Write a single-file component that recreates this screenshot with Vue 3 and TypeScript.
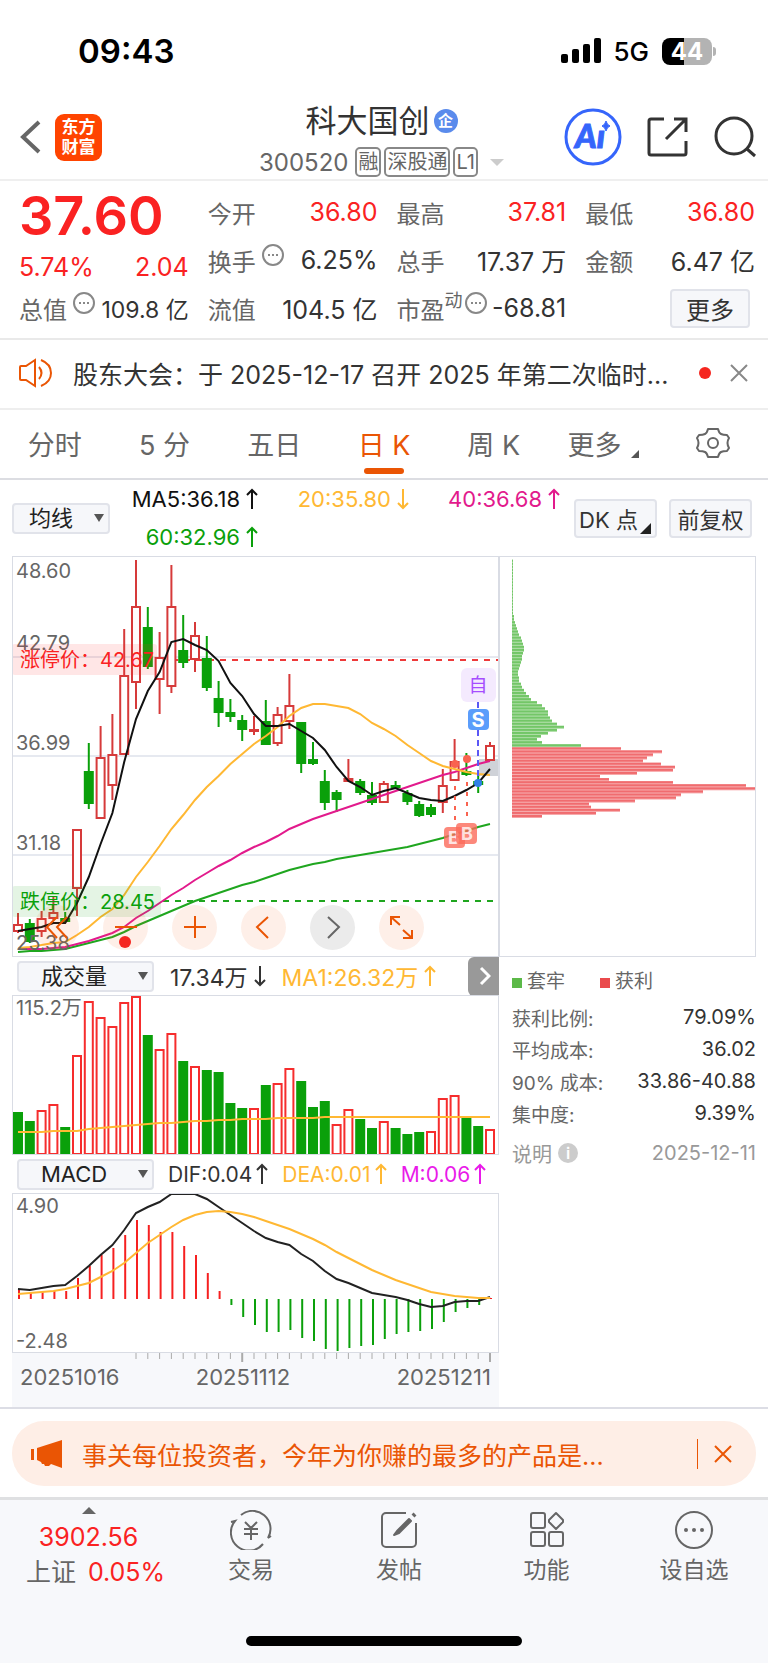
<script setup lang="ts">
import { ref } from 'vue'

type Candle = [kind: 'r' | 'g', high: number, top: number, bottom: number, low: number]

const STEP = 11.8
const cx = (i: number): number => Math.round((6 + i * STEP) * 10) / 10
const line = (ys: number[]): string => ys.map((y, i) => `${cx(i)},${y}`).join(' ')

const candles: Candle[] = [
  ['r', 357, 368, 376, 377], ['g', 363, 367, 386, 387], ['r', 355, 362, 376, 381], ['r', 340, 356, 363, 364],
  ['g', 356, 362, 366, 367], ['r', 273, 273, 333, 360], ['g', 187, 215, 248, 253], ['r', 170, 201, 263, 263],
  ['r', 158, 198, 230, 244], ['r', 73, 119, 199, 199], ['r', 4, 50, 127, 153], ['g', 51, 71, 111, 113],
  ['r', 76, 101, 124, 158], ['r', 9, 50, 131, 137], ['g', 59, 94, 107, 112], ['r', 66, 79, 104, 116],
  ['g', 80, 102, 132, 135], ['g', 125, 142, 157, 171], ['g', 143, 156, 161, 166], ['g', 159, 164, 174, 185],
  ['r', 160, 173, 175, 179], ['g', 144, 165, 189, 189], ['r', 151, 158, 188, 190], ['r', 118, 149, 166, 173],
  ['g', 166, 166, 208, 217], ['g', 186, 203, 208, 209], ['g', 214, 225, 247, 254], ['g', 234, 236, 244, 256],
  ['r', 203, 222, 226, 226], ['g', 223, 225, 237, 239], ['g', 226, 239, 247, 249], ['r', 225, 227, 247, 247],
  ['g', 225, 229, 232, 233], ['g', 234, 237, 246, 249], ['g', 245, 248, 260, 261], ['g', 248, 251, 259, 261],
  ['r', 213, 229, 247, 257], ['r', 183, 205, 225, 225], ['g', 197, 215, 219, 220], ['g', 219, 225, 229, 237],
  ['r', 186, 189, 205, 205],
]
const ma5 = [375, 373, 371, 367, 367, 347, 321, 288, 257, 206, 163, 135, 116, 86, 83, 89, 94, 105, 127, 140, 158, 170, 170, 168, 175, 182, 194, 211, 225, 231, 239, 235, 232, 237, 242, 244, 245, 240, 234, 227, 213]
const ma20 = [392, 391, 389, 387, 386, 379, 371, 361, 353, 339, 321, 306, 290, 273, 259, 244, 231, 220, 208, 198, 188, 180, 171, 160, 152, 148, 148, 150, 152, 158, 167, 173, 180, 189, 197, 205, 210, 213, 216, 218, 219]
const ma40 = [393, 393, 393, 392, 391, 388, 385, 381, 377, 371, 362, 355, 347, 339, 332, 324, 317, 310, 304, 297, 291, 286, 280, 273, 268, 263, 259, 255, 251, 247, 243, 239, 235, 231, 227, 223, 219, 216, 212, 208, 205]
const ma60 = [396, 395, 395, 394, 393, 390, 387, 384, 381, 376, 370, 365, 360, 355, 350, 345, 341, 337, 333, 329, 326, 322, 318, 314, 311, 308, 306, 303, 301, 299, 297, 295, 293, 291, 288, 285, 282, 278, 275, 271, 268]

const volKinds = 'ggrrgrrrrrrgrrgrggggrgrrgggrrggrgggrrrggr'.split('')
const volTops = [117, 126, 115, 109, 132, 60, 6, 22, 31, 7, 1, 40, 54, 38, 66, 71, 75, 77, 108, 113, 113, 90, 88, 73, 86, 112, 106, 129, 114, 124, 133, 126, 133, 139, 137, 136, 103, 100, 122, 131, 134]
const volMa = [137, 137, 137, 136, 136, 136, 134, 133, 132, 131, 130, 129, 128, 128, 127, 126, 126, 125, 125, 124, 124, 124, 123, 123, 123, 123, 122, 122, 122, 122, 122, 122, 122, 122, 122, 122, 122, 122, 122, 122, 122]

const macdBars = [97, 100, 99, 98, 98, 85, 73, 62, 55, 42, 27, 32, 39, 39, 53, 62, 80, 98, 112, 124, 132, 139, 139, 137, 145, 148, 156, 158, 155, 153, 152, 146, 141, 139, 138, 136, 129, 119, 115, 112, 105]
const dif = [96, 97, 95, 93, 92, 83, 73, 62, 52, 37, 20, 14, 9, 1, 1, 1, 6, 14, 22, 30, 38, 45, 49, 52, 61, 68, 78, 86, 90, 95, 100, 102, 104, 107, 111, 114, 113, 109, 108, 108, 104]
const dea = [101, 100, 99, 98, 96, 93, 90, 84, 78, 70, 60, 50, 42, 34, 27, 22, 19, 18, 19, 21, 24, 28, 32, 36, 41, 46, 52, 59, 65, 71, 77, 82, 87, 91, 95, 99, 101, 103, 104, 105, 105]
const ticks = Array.from({ length: 31 }, (_, k) => k + 10)

const trapped = [
  ...Array.from({ length: 17 }, () => 1),
  1, 2, 2, 3, 4, 5, 6, 7, 9, 10, 11, 12, 12, 11, 10, 10, 9, 8, 7, 6, 6, 7, 7, 9, 10, 12, 14, 17, 19, 25, 30, 33, 36, 36, 38, 40, 45, 52, 45, 36, 29, 25, 30, 69,
]
const gained = [109, 150, 141, 135, 131, 149, 163, 161, 125, 88, 97, 161, 234, 243, 191, 169, 164, 123, 77, 79, 108, 84, 30]
const chips = [...trapped.map((w) => ({ w, up: false })), ...gained.map((w) => ({ w, up: true }))].map((c, i, all) => ({
  ...c,
  y: 259 - (all.length - 1 - i) * 3.076,
}))

const UP = 'M6 21V2M1 7l5-5 5 5'
const DOWN = 'M6 1v19M1 15l5 5 5-5'
const averages = [
  { cls: 'black', text: 'MA5:36.18', arrow: UP },
  { cls: 'gold', text: '20:35.80', arrow: DOWN },
  { cls: 'pink', text: '40:36.68', arrow: UP },
  { cls: 'green', text: '60:32.96', arrow: UP },
]

const stats = [
  [
    { label: '今开', value: '36.80', red: true },
    { label: '换手', value: '6.25%', dots: true },
    { label: '流值', value: '104.5 亿' },
  ],
  [
    { label: '最高', value: '37.81', red: true },
    { label: '总手', value: '17.37 万' },
    { label: '市盈', sup: '动', value: '-68.81', dots: true },
  ],
  [
    { label: '最低', value: '36.80', red: true },
    { label: '金额', value: '6.47 亿' },
  ],
] as { label: string; value: string; red?: boolean; dots?: boolean; sup?: string }[][]

const tabs = ['分时', '5 分', '五日', '日 K', '周 K', '更多']
const active = ref('日 K')

const costs = [
  ['获利比例:', '79.09%'],
  ['平均成本:', '36.02'],
  ['90% 成本:', '33.86-40.88'],
  ['集中度:', '9.39%'],
]
</script>

<template>
  <div class="page">
    <div class="status">
      <span class="clock">09:43</span>
      <div class="signal">
        <svg width="40" height="26" viewBox="0 0 40 26" aria-hidden="true">
          <rect x="0" y="16" width="7" height="9" rx="2" /><rect x="11" y="11" width="7" height="14" rx="2" />
          <rect x="22" y="6" width="7" height="19" rx="2" /><rect x="33" y="0" width="7" height="25" rx="2" />
        </svg>
        <span class="net">5G</span>
        <span class="battery">44</span>
      </div>
    </div>

    <header class="head">
      <div class="left">
        <button class="plain" aria-label="返回">
          <svg width="22" height="36" viewBox="0 0 22 36"><path d="M19 3 3 18l16 15" fill="none" stroke="#666" stroke-width="4" /></svg>
        </button>
        <span class="logo">东方<br />财富</span>
      </div>
      <div class="title">
        <h1>科大国创<span class="corp">企</span></h1>
        <p>
          <span class="code">300520</span><span class="tag">融</span><span class="tag">深股通</span><span class="tag">L1</span>
          <i class="caret"></i>
        </p>
      </div>
      <div class="right">
        <button class="plain" aria-label="Ai">
          <svg width="58" height="58" viewBox="0 0 58 58">
            <circle cx="29" cy="29" r="27" fill="#fff" stroke="#3565fb" stroke-width="3" />
            <text x="11" y="40" class="ai">Aı</text>
            <path d="M42 13q1 4 4 5-3 1-4 5-1-4-4-5 3-1 4-5z" fill="#3565fb" stroke="#3565fb" />
          </svg>
        </button>
        <button class="plain" aria-label="分享">
          <svg width="42" height="42" viewBox="0 0 42 42" fill="none" stroke="#333" stroke-width="3">
            <path d="M17 3H4a2 2 0 0 0-2 2v32a2 2 0 0 0 2 2h33a2 2 0 0 0 2-2V25M19 23 39 3M27 3h12v13" />
          </svg>
        </button>
        <button class="plain" aria-label="搜索">
          <svg width="42" height="42" viewBox="0 0 42 42" fill="none" stroke="#333" stroke-width="3">
            <circle cx="20" cy="20" r="18" /><path d="m33 33 8 7" />
          </svg>
        </button>
      </div>
    </header>

    <section class="quote">
      <div class="main">
        <strong>37.60</strong>
        <div class="chg"><span>5.74%</span><span>2.04</span></div>
        <div class="cap">
          <span class="k">总值<svg class="dots" width="22" height="22" viewBox="0 0 22 22"><circle cx="11" cy="11" r="10" /><path d="M6 11h2m2 0h2m2 0h2" /></svg></span>
          <span>109.8 亿</span>
        </div>
      </div>
      <div v-for="(col, c) in stats" :key="c" class="col">
        <div v-for="s in col" :key="s.label" class="row">
          <span class="k">{{ s.label }}<sup v-if="s.sup">{{ s.sup }}</sup><svg v-if="s.dots" class="dots" width="22" height="22" viewBox="0 0 22 22"><circle cx="11" cy="11" r="10" /><path d="M6 11h2m2 0h2m2 0h2" /></svg></span>
          <span class="v" :class="{ red: s.red }">{{ s.value }}</span>
        </div>
        <div v-if="c === 2" class="row end"><button class="more">更多</button></div>
      </div>
    </section>

    <section class="notice">
      <svg width="34" height="30" viewBox="0 0 34 30" fill="none" stroke="#ea5504" stroke-width="2">
        <path d="M2 8h5l9-6v26l-9-6H2a1 1 0 0 1-1-1V9a1 1 0 0 1 1-1zM20 9q5 6 0 12M22 2q10 4 10 13t-10 13" />
      </svg>
      <a href="#">股东大会：于 2025-12-17 召开 2025 年第二次临时...</a>
      <i class="dot"></i>
      <button class="plain" aria-label="关闭公告">
        <svg width="18" height="18" viewBox="0 0 18 18"><path d="m1 1 16 16M17 1 1 17" stroke="#888" stroke-width="2" /></svg>
      </button>
    </section>

    <nav class="tabs">
      <button v-for="t in tabs" :key="t" :class="{ on: t === active, sub: t === '更多' }" @click="active = t">{{ t }}</button>
      <button aria-label="设置">
        <svg width="34" height="32" viewBox="0 0 34 32" fill="none" stroke="#666" stroke-width="2">
          <path d="M12 2h10q1 4 3 5t6 1l2 3q-3 5 0 10l-2 3q-4 0-6 1t-3 5H12q-1-4-3-5t-6-1l-2-3q3-5 0-10l2-3q4 0 6-1t3-5z" stroke-linejoin="round" />
          <circle cx="17" cy="16" r="5" />
        </svg>
      </button>
    </nav>

    <section class="legend">
      <span class="pick short"><select aria-label="主图指标"><option>均线</option></select></span>
      <div class="averages">
        <span v-for="a in averages" :key="a.text" :class="a.cls">{{ a.text }}<svg class="arrow" width="12" height="22" viewBox="0 0 12 22"><path :d="a.arrow" /></svg></span>
      </div>
      <button class="opt corner">DK 点</button>
      <button class="opt">前复权</button>
    </section>

    <main class="panels">
      <div class="charts">
        <div class="frame">
          <svg viewBox="0 0 487 401" class="plot">
            <path d="M0 101h487M0 200h487M0 299h487" stroke="#e6e9f0" stroke-width="2" />
            <path d="M160 104h327" stroke="#ee3a3a" stroke-width="2" stroke-dasharray="6 6" />
            <path d="M151 345h336" stroke="#1fa61f" stroke-width="2" stroke-dasharray="6 6" />
            <rect x="467" y="203" width="20" height="17" fill="#cfd2d8" />
            <g v-for="(k, i) in candles" :key="i" :class="k[0] === 'r' ? 'rise' : 'fall'">
              <path :d="`M${cx(i)} ${k[1]}V${k[2]}M${cx(i)} ${k[3]}V${k[4]}`" />
              <rect :x="cx(i) - 4" :y="k[2] + 1" width="8" :height="Math.max(k[3] - k[2] - 2, 1)" />
            </g>
            <g class="curve">
              <polyline :points="line(ma60)" stroke="#1fa61f" />
              <polyline :points="line(ma40)" stroke="#e21a8c" />
              <polyline :points="line(ma20)" stroke="#ffb833" />
              <polyline :points="line(ma5)" stroke="#111" />
            </g>
            <g class="axis">
              <text x="4" y="22">48.60</text><text x="4" y="94">42.79</text><text x="4" y="194">36.99</text>
              <text x="4" y="294">31.18</text><text x="4" y="394">25.38</text>
            </g>
            <rect x="0" y="88" width="145" height="31" rx="3" fill="#f33" fill-opacity=".12" />
            <text x="8" y="111" class="limit" fill="#fa2222">涨停价：42.67</text>
            <rect x="0" y="330" width="149" height="31" rx="3" fill="#1fa61f" fill-opacity=".12" />
            <text x="8" y="353" class="limit" fill="#0aa00a">跌停价：28.45</text>

            <path d="M443 230v37M455 226v34" stroke="#f9634f" stroke-width="2" stroke-dasharray="4 6" />
            <path d="M466 146v10M466 174v50" stroke="#5b57f5" stroke-width="2" stroke-dasharray="6 4" />
            <circle cx="443" cy="208" r="4" fill="#f9634f" /><circle cx="455" cy="203" r="4" fill="#f9634f" />
            <circle cx="466" cy="227" r="4" fill="#2e7fe8" />
            <rect x="449" y="112" width="35" height="34" rx="6" fill="#f4eafe" />
            <text x="466" y="136" class="mark" fill="#a64dff" font-size="19">自</text>
            <rect x="456" y="153" width="21" height="21" rx="4" fill="#5b9dfb" />
            <text x="466" y="171" class="mark bold" fill="#fff" font-size="20">S</text>
            <g fill-opacity=".8">
              <rect x="432" y="271" width="21" height="21" rx="4" fill="#fb6a5a" /><text x="442" y="288" class="mark bold" fill="#fff" font-size="18">B</text>
              <rect x="444" y="267" width="21" height="21" rx="4" fill="#fb6a5a" /><text x="455" y="284" class="mark bold" fill="#fff" font-size="18">B</text>
            </g>
          </svg>
          <div class="tools">
            <button aria-label="最早"><svg viewBox="0 0 45 45"><path d="M23 12 13 22l10 11M33 12 23 22l10 11" /></svg></button>
            <button aria-label="缩小"><svg viewBox="0 0 45 45"><path d="M12 22h22" /></svg><i class="dot"></i></button>
            <button aria-label="放大"><svg viewBox="0 0 45 45"><path d="M12 22h22M23 11v22" /></svg></button>
            <button aria-label="左移"><svg viewBox="0 0 45 45"><path d="M27 12 16 22l11 11" /></svg></button>
            <button aria-label="右移" class="off"><svg viewBox="0 0 45 45"><path d="m18 12 11 10-11 11" /></svg></button>
            <button aria-label="全屏"><svg viewBox="0 0 45 45"><path d="m12 12 9 8M12 20v-8h9M33 33l-9-8M33 25v8h-9" /></svg></button>
          </div>
        </div>

        <div class="bar">
          <span class="pick"><select aria-label="副图一指标"><option>成交量</option></select></span>
          <span class="dark">17.34万<svg class="arrow" width="12" height="22" viewBox="0 0 12 22"><path :d="DOWN" /></svg></span>
          <span class="gold">MA1:26.32万<svg class="arrow" width="12" height="22" viewBox="0 0 12 22"><path :d="UP" /></svg></span>
          <button class="next" aria-label="更多指标"><svg width="12" height="20" viewBox="0 0 12 20"><path d="m2 2 8 8-8 8" fill="none" stroke="#fff" stroke-width="3" /></svg></button>
        </div>
        <div class="frame">
          <svg viewBox="0 0 487 160" class="plot">
            <text x="4" y="20" class="axis">115.2万</text>
            <template v-for="(y, i) in volTops" :key="i">
              <rect v-if="volKinds[i] === 'g'" :x="cx(i) - 5" :y="y" width="10" :height="160 - y" fill="#0aa00a" />
              <rect v-else :x="cx(i) - 4" :y="y + 1" width="8" :height="158 - y" fill="#fff" stroke="#f62d2d" stroke-width="2" />
            </template>
            <polyline class="curve" :points="line(volMa)" stroke="#ffb833" />
          </svg>
        </div>

        <div class="bar tight">
          <span class="pick"><select aria-label="副图二指标"><option>MACD</option></select></span>
          <span class="dark">DIF:0.04<svg class="arrow" width="12" height="22" viewBox="0 0 12 22"><path :d="UP" /></svg></span>
          <span class="gold">DEA:0.01<svg class="arrow" width="12" height="22" viewBox="0 0 12 22"><path :d="UP" /></svg></span>
          <span class="magenta">M:0.06<svg class="arrow" width="12" height="22" viewBox="0 0 12 22"><path :d="UP" /></svg></span>
        </div>
        <div class="frame">
          <svg viewBox="0 0 487 160" class="plot">
            <path v-for="(y, i) in macdBars" :key="i" :d="`M${cx(i) + 1} 106V${y}`" :stroke="y < 106 ? '#f62020' : '#0aa00a'" stroke-width="2" />
            <g class="curve">
              <polyline :points="line(dif)" stroke="#222" />
              <polyline :points="line(dea)" stroke="#ffb833" />
            </g>
            <g class="axis"><text x="4" y="20">4.90</text><text x="4" y="155">-2.48</text></g>
          </svg>
        </div>
        <div class="dates">
          <svg viewBox="0 0 487 10" class="plot">
            <path v-for="i in ticks" :key="i" :d="`M${cx(i)} 0V${i === 19 || i === 40 ? 9 : 6}`" stroke="#aaa" :stroke-width="i === 19 || i === 40 ? 2 : 1" />
          </svg>
          <div><span>20251016</span><span>20251112</span><span>20251211</span></div>
        </div>
      </div>

      <aside class="side">
        <div class="frame">
          <svg viewBox="0 0 257 401" class="plot">
            <g v-for="(c, i) in chips" :key="i" :fill="c.up ? '#ee5a5c' : '#62bf54'">
              <rect x="13" :y="c.y" :width="c.w" height="3" fill-opacity=".55" />
              <rect x="13" :y="c.y" :width="c.w" height="2" fill-opacity=".75" />
            </g>
          </svg>
        </div>
        <div class="info">
          <div class="keys"><span class="lose">套牢</span><span class="win">获利</span></div>
          <dl>
            <div v-for="c in costs" :key="c[0]"><dt>{{ c[0] }}</dt><dd>{{ c[1] }}</dd></div>
          </dl>
          <div class="note"><span>说明<i>i</i></span><span>2025-12-11</span></div>
        </div>
      </aside>
    </main>

    <section class="promo-wrap">
      <div class="promo">
        <svg width="32" height="28" viewBox="0 0 32 28" fill="#ea5504">
          <path d="M0 9h3v11H0zM6 8 31 0v28l-11-4-2 2h-4l-1 -2h-2l-1-2-4-2z" />
        </svg>
        <a href="#">事关每位投资者，今年为你赚的最多的产品是...</a>
        <i class="rule"></i>
        <button class="plain" aria-label="关闭推广">
          <svg width="18" height="18" viewBox="0 0 18 18"><path d="m1 1 16 16M17 1 1 17" stroke="#ea5504" stroke-width="2" /></svg>
        </button>
      </div>
    </section>

    <footer class="foot">
      <div class="items">
        <button class="index">
          <i class="tri"></i>
          <span class="red">3902.56</span>
          <span class="pair"><span>上证</span><span class="red">0.05%</span></span>
        </button>
        <button>
          <svg width="42" height="40" viewBox="0 0 42 40">
            <path d="M11 5a18 18 0 0 1 27 23l3-2M33 34A18 18 0 0 1 5 11l-4 1M15 12l6 6 6-6M21 18v12M14 19h14M14 24h14" />
          </svg>交易
        </button>
        <button>
          <svg width="42" height="40" viewBox="0 0 42 40">
            <path d="M28 3H8a4 4 0 0 0-4 4v26a4 4 0 0 0 4 4h26a4 4 0 0 0 4-4V13" />
            <path d="m16 25 3-4L31 9l2 2-12 12z" fill="#666" stroke-linejoin="round" /><path d="m35 6 2-2" stroke-width="4" />
          </svg>发帖
        </button>
        <button>
          <svg width="42" height="40" viewBox="0 0 42 40">
            <rect x="5" y="3" width="14" height="15" rx="2" /><rect x="5" y="22" width="14" height="14" rx="2" />
            <rect x="23" y="22" width="14" height="14" rx="2" /><path d="m29 4 1-1 1 1 6 6v2l-6 6-1 1-1-1-6-6v-2z" stroke-linejoin="round" />
          </svg>功能
        </button>
        <button>
          <svg width="42" height="40" viewBox="0 0 42 40">
            <circle cx="21" cy="20" r="18" />
            <g fill="#666" stroke="none"><circle cx="13" cy="20" r="2" /><circle cx="21" cy="20" r="2" /><circle cx="29" cy="20" r="2" /></g>
          </svg>设自选
        </button>
      </div>
      <i class="home"></i>
    </footer>
  </div>
</template>

<style>
body {
  margin: 0;
  background: #fff;
}
</style>

<style scoped>
.page {
  font-family: Inter, "Noto Sans CJK SC", sans-serif;
  font-size: 24px;
  color: #333;
}
.page * {
  box-sizing: border-box;
}
button,
select {
  font: inherit;
  color: inherit;
  margin: 0;
  padding: 0;
  border: 0;
  background: none;
}
a {
  color: inherit;
  text-decoration: none;
}
svg {
  display: block;
  flex: none;
}
p,
h1,
dl,
dd {
  margin: 0;
}
.red {
  color: #fa2222;
}
.plain {
  display: block;
}

.status {
  height: 96px;
  padding: 6px 56px 0 78px;
  display: flex;
  align-items: center;
  justify-content: space-between;
  color: #000;
}
.clock {
  font-size: 33px;
  font-weight: 600;
}
.signal {
  display: flex;
  align-items: center;
}
.net {
  margin: 0 13px 0 12px;
  font-size: 26px;
  font-weight: 500;
}
.battery {
  position: relative;
  width: 50px;
  height: 27px;
  border-radius: 8px;
  background: linear-gradient(90deg, #000 44%, #b3b3b3 44%);
  color: #fff;
  font-size: 24px;
  font-weight: 700;
  line-height: 27px;
  text-align: center;
}
.battery::after {
  content: "";
  position: absolute;
  right: -4px;
  top: 9px;
  width: 3px;
  height: 9px;
  border-radius: 0 3px 3px 0;
  background: #b3b3b3;
}

.head {
  height: 85px;
  padding: 0 12px;
  display: grid;
  grid-template-columns: 1fr auto 1fr;
  align-items: center;
  border-bottom: 2px solid #efefef;
}
.left,
.right {
  display: flex;
  align-items: center;
  padding-bottom: 4px;
}
.left {
  gap: 13px;
  padding-left: 8px;
}
.right {
  justify-content: flex-end;
  gap: 25px;
}
.logo {
  width: 47px;
  height: 47px;
  padding-top: 3px;
  border-radius: 9px;
  background: #ff4400;
  color: #fff;
  font-size: 17px;
  font-weight: 700;
  line-height: 20px;
  text-align: center;
}
.title {
  padding: 4px 5px 0 0;
  text-align: center;
}
h1 {
  display: flex;
  justify-content: center;
  align-items: center;
  gap: 4px;
  font-size: 31px;
  font-weight: 400;
  line-height: 42px;
}
.corp {
  width: 24px;
  height: 24px;
  border-radius: 50%;
  background: #5a8bec;
  color: #fff;
  font-size: 15px;
  font-weight: 700;
  line-height: 23px;
}
.title p {
  display: flex;
  justify-content: center;
  align-items: center;
  gap: 3px;
  height: 40px;
  color: #666;
}
.code {
  margin-right: 4px;
}
.tag {
  height: 30px;
  padding: 0 1px;
  border: 2px solid #888;
  border-radius: 5px;
  font-size: 20px;
  line-height: 26px;
}
.caret {
  margin-left: 9px;
  border: 7px solid transparent;
  border-top-color: #ccc;
  border-bottom: 0;
}
.ai {
  font: italic 900 33px Lato, sans-serif;
  fill: #3565fb;
  stroke: #3565fb;
}

.quote {
  padding: 7px 13px 6px 19px;
  display: grid;
  grid-template-columns: repeat(4, 1fr);
  gap: 19px;
  border-bottom: 2px solid #e9e9e9;
}
.main strong {
  display: block;
  height: 56px;
  font-size: 54px;
  font-weight: 600;
  line-height: 56px;
  color: #fa2222;
}
.chg,
.cap,
.row {
  display: flex;
  justify-content: space-between;
  align-items: center;
  white-space: nowrap;
}
.chg {
  height: 45px;
  font-size: 25px;
  color: #fa2222;
}
.cap {
  height: 38px;
}
.cap > span:last-child {
  font-size: 23px;
}
.row {
  height: 48px;
}
.row.end {
  justify-content: flex-end;
  padding-right: 5px;
}
.v {
  font-size: 25px;
}
.k {
  display: flex;
  align-items: center;
  color: #666;
}
.k sup {
  align-self: flex-start;
  font-size: 18px;
  line-height: 20px;
}
.dots {
  margin: 0 0 10px 6px;
  fill: none;
  stroke: #888;
  stroke-width: 2;
}
sup + .dots {
  margin-left: 2px;
}
.more {
  width: 80px;
  height: 39px;
  border: 2px solid #e1e3ea;
  border-radius: 4px;
  background: #f6f7fa;
}

.notice {
  height: 70px;
  padding: 0 20px 2px 19px;
  display: flex;
  align-items: center;
  border-bottom: 2px solid #eee;
  font-size: 25px;
}
.notice a {
  flex: 1;
  margin-left: 20px;
  white-space: nowrap;
}
.dot {
  width: 12px;
  height: 12px;
  border-radius: 50%;
  background: #f5261f;
}
.notice button {
  margin-left: 19px;
}

.tabs {
  height: 70px;
  display: grid;
  grid-template-columns: repeat(7, 1fr);
  justify-items: center;
  border-bottom: 2px solid #dcdde2;
  font-size: 27px;
  color: #666;
}
.tabs button {
  position: relative;
  height: 66px;
}
.tabs .on {
  color: #ea5504;
}
.tabs .on::after {
  content: "";
  position: absolute;
  left: 50%;
  bottom: 2px;
  width: 40px;
  height: 6px;
  margin-left: -20px;
  border-radius: 3px;
  background: #ea5504;
}
.tabs .sub {
  padding-right: 18px;
}
.sub::after {
  content: "";
  position: absolute;
  right: 0;
  bottom: 18px;
  border-bottom: 8px solid #555;
  border-left: 8px solid transparent;
}

.legend {
  padding: 0 16px 0 12px;
  display: flex;
  align-items: center;
  font-size: 22px;
}
.averages {
  flex: 1;
  display: grid;
  grid-template-columns: 148fr 151fr 151fr;
  grid-auto-rows: 38px;
  justify-items: end;
  align-items: center;
  margin-right: 14px;
}
.averages span,
.bar > span {
  display: flex;
  align-items: center;
  white-space: nowrap;
}
.arrow {
  margin-left: 6px;
  fill: none;
  stroke: currentColor;
  stroke-width: 2;
}
.black {
  color: #111;
}
.dark {
  color: #333;
}
.gold {
  color: #ffb833;
}
.pink {
  color: #e21a8c;
}
.green {
  color: #0aa00a;
}
.magenta {
  color: #e91ae9;
}
.opt {
  position: relative;
  width: 83px;
  height: 39px;
  border: 2px solid #e1e3ea;
  border-radius: 4px;
  background: #f6f7fa;
  white-space: nowrap;
}
.opt + .opt {
  margin-left: 12px;
}
.corner {
  padding-right: 14px;
}
.corner::after {
  content: "";
  position: absolute;
  right: 4px;
  bottom: 2px;
  border-bottom: 11px solid #222;
  border-left: 11px solid transparent;
}
.pick {
  position: relative;
  flex: 0 0 137px;
}
.pick.short {
  flex-basis: 98px;
}
.pick select {
  width: 100%;
  height: 31px;
  padding-left: 22px;
  appearance: none;
  border: 2px solid #e1e3ea;
  border-radius: 4px;
  background: #f6f7fa;
  line-height: 26px;
  color: #222;
}
.pick.short select {
  padding-left: 15px;
}
.pick::after {
  content: "";
  position: absolute;
  right: 6px;
  top: 11px;
  border: 5px solid transparent;
  border-top: 8px solid #555;
  border-bottom: 0;
  pointer-events: none;
}

.panels {
  padding: 0 12px;
  display: grid;
  grid-template-columns: minmax(0, 487fr) minmax(0, 257fr);
  border-bottom: 2px solid #dcdde5;
}
.frame {
  position: relative;
  outline: 1px solid #d9dce4;
  outline-offset: -1px;
}
.plot {
  width: 100%;
  height: auto;
}
.rise {
  fill: #fff;
  stroke: #d63a3a;
  stroke-width: 2;
}
.fall {
  fill: #0aa00a;
  stroke: #0aa00a;
  stroke-width: 2;
}
.curve {
  fill: none;
  stroke-width: 2;
}
.axis {
  font-size: 20px;
  fill: #666;
}
.limit {
  font-size: 20px;
}
.mark {
  text-anchor: middle;
}
.bold {
  font-weight: 700;
}
.tools {
  position: absolute;
  left: 22px;
  bottom: 7px;
  display: flex;
  gap: 24px;
}
.tools button {
  position: relative;
  width: 45px;
  height: 45px;
  border-radius: 50%;
  background: rgb(250 100 30 / 10%);
}
.tools .off {
  background: #ebebeb;
}
.tools svg {
  fill: none;
  stroke: #ea5504;
  stroke-width: 2;
}
.tools .off svg {
  stroke: #666;
}
.tools .dot {
  position: absolute;
  left: 16px;
  bottom: 2px;
}
.bar {
  position: relative;
  height: 38px;
  padding-left: 5px;
  display: flex;
  align-items: center;
  gap: 16px;
  font-size: 23px;
}
.bar select {
  font-size: 22px;
}
.tight {
  gap: 14px;
  font-size: 21px;
}
.tight .arrow {
  margin-left: 4px;
}
.next {
  width: 31px;
  height: 39px;
  margin-left: auto;
  padding-left: 11px;
  border-radius: 6px 0 0 6px;
  background: #999;
}
.dates {
  height: 54px;
  background: #f7f8fb;
  color: #666;
  font-size: 22px;
}
.dates div {
  padding: 0 8px;
  display: grid;
  grid-template-columns: 125fr 196fr 150fr;
  line-height: 28px;
}
.dates span:nth-child(2) {
  text-align: center;
}
.dates span:nth-child(3) {
  text-align: right;
}

.info {
  padding-left: 13px;
  color: #666;
  font-size: 20px;
}
.keys {
  height: 44px;
  display: flex;
  align-items: center;
  gap: 35px;
  font-size: 19px;
}
.keys span::before {
  content: "";
  display: inline-block;
  width: 10px;
  height: 10px;
  margin-right: 5px;
  background: #5cb948;
}
.keys .win::before {
  background: #ea4a4c;
}
dl div,
.note {
  height: 32px;
  display: flex;
  justify-content: space-between;
  align-items: center;
  white-space: nowrap;
}
dt {
  font-size: 19px;
}
dd {
  color: #333;
}
.note {
  margin-top: 8px;
  color: #999;
}
.note span {
  display: flex;
  align-items: center;
}
.note i {
  width: 20px;
  height: 20px;
  margin-left: 6px;
  border-radius: 50%;
  background: #ccc;
  color: #fff;
  font-size: 16px;
  font-style: normal;
  font-weight: 600;
  line-height: 20px;
  text-align: center;
}

.promo-wrap {
  padding: 12px 12px 11px;
  border-bottom: 3px solid #dfe0e2;
}
.promo {
  height: 65px;
  padding: 0 24px 0 19px;
  display: flex;
  align-items: center;
  border-radius: 32px;
  background: #feeee6;
  color: #ea5504;
  font-size: 25px;
}
.promo a {
  flex: 1;
  margin-left: 19px;
  white-space: nowrap;
}
.rule {
  width: 1px;
  height: 30px;
  margin-right: 16px;
  background: #ea5504;
}

.foot {
  padding-bottom: 17px;
  background: #f7f8fb;
}
.items {
  height: 136px;
  padding: 7px 0 0;
  display: grid;
  grid-template-columns: 177fr 148fr 148fr 147fr 148fr;
  align-items: start;
}
.items button {
  display: flex;
  flex-direction: column;
  align-items: center;
  padding-top: 3px;
  gap: 3px;
  color: #666;
  font-size: 23px;
  line-height: 34px;
}
.items svg {
  fill: none;
  stroke: #666;
  stroke-width: 2;
}
.items .index {
  padding-top: 0;
  gap: 0;
  font-size: 25px;
}
.index span {
  line-height: 35px;
}
.pair {
  display: flex;
  gap: 12px;
  padding-left: 14px;
}
.tri {
  margin-bottom: 6px;
  border: 7px solid transparent;
  border-bottom-color: #666;
  border-top: 0;
}
.home {
  display: block;
  width: 36%;
  height: 10px;
  margin: 0 auto;
  border-radius: 5px;
  background: #000;
}
</style>
